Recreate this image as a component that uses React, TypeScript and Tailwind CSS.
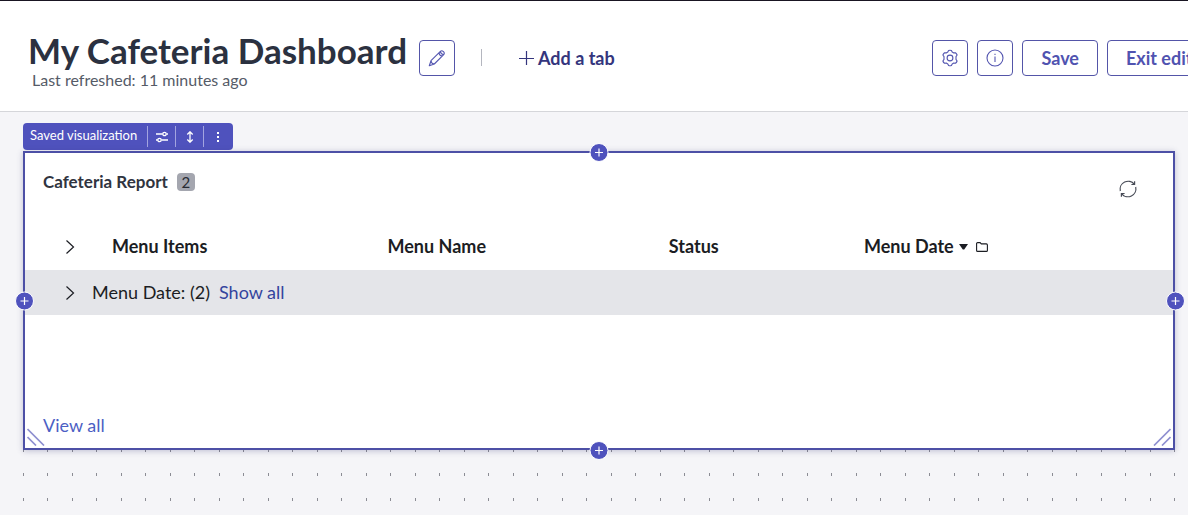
import type { ReactNode } from "react";

const iconButton =
  "flex size-9 shrink-0 items-center justify-center rounded border border-[#5355a8] bg-white text-[#5355b0]";
const textButton =
  "h-9 shrink-0 whitespace-nowrap rounded border border-[#5355a8] bg-white px-[18px] text-lg leading-6 font-bold text-[#5053b0]";

function Header() {
  return (
    <header className="overflow-hidden border-t border-b border-t-[#191522] border-b-[#d5d6da] bg-white">
      <div className="flex h-[110px] items-center pt-[3px] pl-7">
        <div className="shrink-0 pt-1">
          <h1 className="text-[35px] leading-10 font-bold whitespace-nowrap text-[#2b3140]">My Cafeteria Dashboard</h1>
          <p className="pl-1 text-base leading-5 text-[#555b67]">Last refreshed: 11 minutes ago</p>
        </div>
        <button type="button" aria-label="Edit dashboard name" className={`ml-3 ${iconButton}`}>
          <svg width="18" height="18" viewBox="0 0 18 18" fill="none" stroke="currentColor" strokeWidth="1.1" strokeLinejoin="round">
            <path d="M1.300 16.700 3 11.700 12.400 2.300a1.900 1.900 0 0 1 2.700 0l.6.6a1.900 1.900 0 0 1 0 2.700L6.300 15ZM11 3.700a3.600 3.600 0 0 0 3.300 3.300M12.400 2.300a3.600 3.600 0 0 0 3.300 3.300M3 11.700a3.600 3.600 0 0 0 3.300 3.300" />
          </svg>
        </button>
        <span className="ml-[26px] h-[17px] w-px shrink-0 bg-[#b4b6bf]" />
        <button type="button" className="ml-9 flex shrink-0 items-center gap-1 text-lg leading-6 font-bold whitespace-nowrap text-[#34357d]">
          <svg width="16" height="16" viewBox="0 0 16 16" stroke="currentColor" strokeWidth="1.2">
            <path d="M8.500 1v14M1 8.500h15" />
          </svg>
          Add a tab
        </button>
        <div className="-mr-12 ml-auto flex shrink-0 gap-[9px]">
          <button type="button" aria-label="Settings" className={iconButton}>
            <svg width="18" height="18" viewBox="0 0 18 18" fill="none" stroke="currentColor" strokeWidth="1.1" strokeLinejoin="round">
              <path d="M6.800 3.100 7.600 1.500Q9 1 10.400 1.500L11.200 3.100 12.700 3.900 14.500 3.700Q15.700 4.600 16.100 6L15 7.600V10.400L16.100 12Q15.700 13.400 14.500 14.300L12.700 14.100 11.200 14.900 10.400 16.500Q9 17 7.600 16.500L6.800 14.900 5.300 14.100 3.500 14.300Q2.300 13.400 1.900 12L3 10.400V7.600L1.900 6Q2.300 4.600 3.500 3.700L5.300 3.900Z" />
              <circle cx="9" cy="9" r="2.900" />
            </svg>
          </button>
          <button type="button" aria-label="Information" className={iconButton}>
            <svg width="18" height="18" viewBox="0 0 18 18" fill="none" stroke="currentColor" strokeWidth="1.100">
              <circle cx="9" cy="9" r="8" />
              <path d="M9 7.500V13M9 4.700V6" />
            </svg>
          </button>
          <button type="button" className={textButton}>Save</button>
          <button type="button" className={textButton}>Exit editing</button>
        </div>
      </div>
    </header>
  );
}

function ToolButton({ label, children }: { label: string; children: ReactNode }) {
  return (
    <button type="button" aria-label={label} className="flex h-[21px] w-7 items-center justify-center border-l border-[#a3a4e0]">
      {children}
    </button>
  );
}

function WidgetToolbar() {
  return (
    <div className="flex h-[27px] w-max items-center rounded-sm bg-[#4f52bd] pr-[2px] pl-[7px] text-white">
      <span className="pr-[10px] pb-[3px] text-[13px] leading-5">Saved visualization</span>
      <ToolButton label="Configure">
        <svg width="12" height="12" viewBox="0 0 12 12" fill="none" stroke="currentColor" strokeWidth="1.300">
          <path d="M0 3h6.500M10.500 3H12M0 9h1.500M5.500 9H12" />
          <circle cx="8.500" cy="3" r="1.700" />
          <circle cx="3.500" cy="9" r="1.700" />
        </svg>
      </ToolButton>
      <ToolButton label="Resize height">
        <svg width="12" height="12" viewBox="0 0 12 12" fill="none" stroke="currentColor" strokeWidth="1.300">
          <path d="M6 1v10M3.300 3.500 6 .8l2.700 2.700M3.300 8.500 6 11.200l2.700-2.700" />
        </svg>
      </ToolButton>
      <ToolButton label="More actions">
        <svg width="12" height="12" viewBox="0 0 12 12" fill="currentColor">
          <path d="M5 1h2v2H5zM5 5h2v2H5zM5 9h2v2H5z" />
        </svg>
      </ToolButton>
    </div>
  );
}

function AddHandle({ label, place }: { label: string; place: string }) {
  return (
    <button
      type="button"
      aria-label={label}
      className={`absolute flex size-[19px] items-center justify-center rounded-full border border-white bg-[#4f52bd] text-white ${place}`}
    >
      <svg width="9" height="9" viewBox="0 0 9 9" stroke="currentColor" strokeWidth="1.200">
        <path d="M4.500 0.500v8M0.500 4.500h8" />
      </svg>
    </button>
  );
}

function Chevron() {
  return (
    <svg width="10" height="14" viewBox="0 0 10 14" fill="none" stroke="currentColor" strokeWidth="1.200">
      <path d="M1.500 0.500 8.500 7l-7 6.500" />
    </svg>
  );
}

function ReportTable() {
  return (
    <table className="mt-6 w-full table-fixed border-collapse text-left text-lg leading-6 text-[#1b1d23]">
      <colgroup>
        <col className="w-[87px]" />
        <col className="w-[24%]" />
        <col className="w-[24.5%]" />
        <col className="w-[17%]" />
        <col />
      </colgroup>
      <thead>
        <tr className="h-12">
          <th className="pl-10">
            <button type="button" aria-label="Expand all groups" className="flex pt-[2px]">
              <Chevron />
            </button>
          </th>
          <th className="font-bold">Menu Items</th>
          <th className="font-bold">Menu Name</th>
          <th className="font-bold">Status</th>
          <th className="font-bold">
            <span className="flex items-center">
              Menu Date
              <svg className="mt-[2px] ml-[5px]" width="9" height="6" viewBox="0 0 9 6" fill="currentColor">
                <path d="M0 0h9L5.200 5.500H3.800Z" />
              </svg>
              <svg className="mt-[2px] ml-2" width="12" height="10" viewBox="0 0 12 10" fill="none" stroke="currentColor" strokeWidth="1.100">
                <path d="M.6 8.400V1.600a1 1 0 0 1 1-1h2.500l1.200 1.300h5.100a1 1 0 0 1 1 1v5.500a1 1 0 0 1-1 1H1.600a1 1 0 0 1-1-1Z" />
              </svg>
            </span>
          </th>
        </tr>
      </thead>
      <tbody>
        <tr className="h-[45px] bg-[#e4e5e9]">
          <td colSpan={5} className="pb-[2px] pl-10">
            <div className="flex items-center">
              <button type="button" aria-label="Expand Menu Date group" className="flex pt-[2px]">
                <Chevron />
              </button>
              <span className="ml-[17px]">Menu Date: (2)</span>
              <a href="#show-all" className="ml-[9px] text-[#34449e]">Show all</a>
            </div>
          </td>
        </tr>
      </tbody>
    </table>
  );
}

function ResizeGrip({ className }: { className: string }) {
  return (
    <svg className={`absolute ${className}`} width="18" height="18" viewBox="0 0 18 18" fill="none" stroke="#8f90d0" strokeWidth="1.700">
      <path d="M1 17.500 17.500 1M9 17.500 17.500 9" />
    </svg>
  );
}

function Widget() {
  return (
    <section className="relative mt-px border-2 border-[#4d50a6] bg-white pb-[10px] shadow-[0_1px_6px_rgba(60,60,120,0.3)]">
      <div className="flex items-start justify-between pt-[17px] pr-9 pl-[18px]">
        <div className="flex items-center gap-[9px]">
          <h2 className="text-[17px] leading-6 font-bold text-[#30343f]">Cafeteria Report</h2>
          <span className="flex h-[18px] w-[18px] items-center justify-center rounded-sm bg-[#a4a6af] text-[15px] leading-[18px] text-[#282b33]">2</span>
        </div>
        <button type="button" aria-label="Refresh" className="mt-[10px] text-[#484c57]">
          <svg width="18" height="18" viewBox="0 0 18 18" fill="none" stroke="currentColor" strokeWidth="1.200">
            <path d="M1.300 11A8 8 0 0 1 15.300 4.200M16.700 7A8 8 0 0 1 2.700 13.800M15.600 1.300v3.200h-3.200M2.400 16.700v-3.200h3.200" />
          </svg>
        </button>
      </div>
      <ReportTable />
      <div className="pt-[98px] pl-[18px]">
        <a href="#view-all" className="text-lg leading-6 text-[#4c5fc4]">View all</a>
      </div>
      <ResizeGrip className="right-[2px] bottom-[2px]" />
      <ResizeGrip className="bottom-[2px] left-[2px] -scale-x-100" />
      <AddHandle label="Add above" place="-top-[10px] left-1/2 -translate-x-1/2" />
      <AddHandle label="Add below" place="-bottom-3 left-1/2 -translate-x-1/2" />
      <AddHandle label="Add left" place="top-1/2 -left-[10px] -translate-y-1/2" />
      <AddHandle label="Add right" place="top-1/2 -right-3 -translate-y-1/2" />
    </section>
  );
}

function DotGrid() {
  return (
    <div className="absolute inset-y-0 right-3 left-[22px]" aria-hidden="true">
      <svg className="size-full">
        <defs>
          <pattern id="dots" x="0" y="17" width="49" height="49" patternUnits="userSpaceOnUse">
            <path d="M1 1h1v3H1zM25 1h1v3h-1zM1 26h1v3H1zM25 26h1v3h-1z" fill="#8b8c94" />
          </pattern>
        </defs>
        <rect y="40" width="100%" height="100%" fill="url(#dots)" />
      </svg>
    </div>
  );
}

export default function App() {
  return (
    <div className="flex min-h-screen flex-col bg-[#f5f5f8] font-[Lato,sans-serif]">
      <Header />
      <main className="relative flex-1 pt-[11px] pr-[13px] pb-10 pl-[23px]">
        <DotGrid />
        <div className="relative">
          <WidgetToolbar />
          <Widget />
        </div>
      </main>
    </div>
  );
}
